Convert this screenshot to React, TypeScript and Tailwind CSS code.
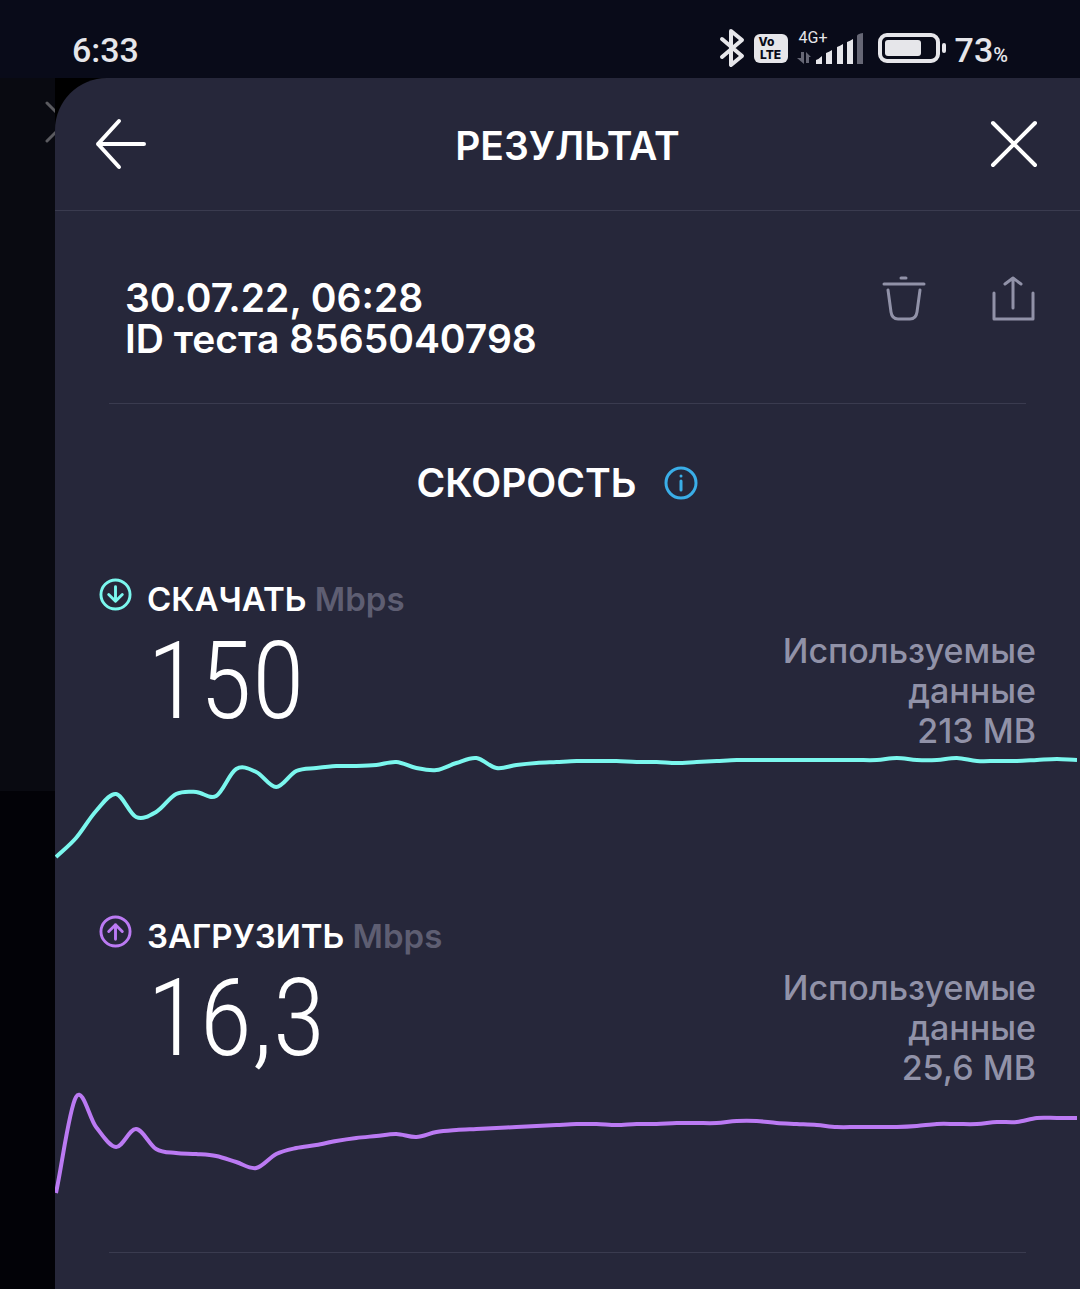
import type { ReactNode } from "react";

interface Metric {
    label: string;
    value: string;
    used: string;
    color: string;
    icon: ReactNode;
    points: number[];
}

const CHART_WIDTH = 1024;
const CHART_HEIGHT = 110;
const STEP = 20;

const downloadPoints = [
    106, 87, 60, 43, 66, 61, 43, 41, 45, 18, 21, 36, 20, 17, 15, 15, 14, 11, 17,
    19, 12, 7, 17, 14, 12, 11, 10, 10, 10, 11, 11, 12, 11, 10, 9, 9, 9, 9, 9, 9,
    9, 9, 7, 9, 9, 7, 10, 10, 10, 9, 8, 9,
];

const uploadPoints = [
    105, 9, 39, 59, 41, 61, 65, 66, 68, 74, 80, 66, 60, 57, 53, 50, 48, 46, 49,
    44, 42, 41, 40, 39, 38, 37, 36, 36, 37, 36, 36, 35, 35, 35, 33, 33, 35, 36,
    37, 39, 39, 39, 39, 38, 36, 36, 36, 34, 34, 30, 30, 30,
];

function smoothPath(points: number[]) {
    let d = `M0 ${points[0]}`;
    for (let i = 0; i < points.length - 1; i++) {
        // the ends have no outer neighbour, so they continue in a straight line
        const before = points[i - 1] ?? 2 * points[i] - points[i + 1];
        const after = points[i + 2] ?? points[i + 1];
        const y1 = points[i] + (points[i + 1] - before) / 6;
        const y2 = points[i + 1] - (after - points[i]) / 6;
        const x = i * STEP;
        d += ` C${x + STEP / 3} ${y1} ${x + (STEP * 2) / 3} ${y2} ${x + STEP} ${points[i + 1]}`;
    }
    return d;
}

const metrics: Metric[] = [
    {
        label: "СКАЧАТЬ",
        value: "150",
        used: "213 MB",
        color: "#7bf7ee",
        icon: <path d="M17 9v15M10 17l7 7 7-7" />,
        points: downloadPoints,
    },
    {
        label: "ЗАГРУЗИТЬ",
        value: "16,3",
        used: "25,6 MB",
        color: "#bb7af3",
        icon: <path d="M17 25V10M10 17l7-7 7 7" />,
        points: uploadPoints,
    },
];

function StatusBar() {
    return (
        <div className="flex h-[78px] items-center justify-between bg-[#090b19] pt-[18px] pr-[72px] pl-[72px] font-[Roboto,sans-serif] text-[#e6e6ea]">
            <span className="pt-1 text-[34px] leading-10 font-medium">6:33</span>
            <div className="flex items-center">
                <svg
                    width="26"
                    height="40"
                    viewBox="0 0 26 40"
                    fill="none"
                    stroke="currentColor"
                    strokeWidth="4"
                    strokeLinecap="round"
                    strokeLinejoin="round"
                >
                    <path d="M3 11l20 17-11 9V3l11 9L3 29" />
                </svg>
                <div className="ml-[9px] flex h-[29px] w-[34px] flex-col items-center justify-center rounded-md bg-[#e6e6ea] font-[Inter,sans-serif] text-xs leading-[13px] font-extrabold text-[#090b19]">
                    <span className="w-6">Vo</span>
                    <span>LTE</span>
                </div>
                <div className="relative ml-[9px] h-10 w-[67px]">
                    <span className="absolute top-0 left-0.5 text-base leading-5">
                        4G+
                    </span>
                    <svg width="67" height="40" viewBox="0 0 67 40" fill="currentColor">
                        <g fill="#666775">
                            <path d="M4 24h3v12L0 30h4zM9 35V24l5 5h-2v6z" />
                            <path d="M60 8q0-2 6-3v31h-6z" />
                        </g>
                        <path d="M19 36v-4q3-1 6-4v8zM29 36V25q3-1 6-3v14zM40 36V19q3-1 6-3v20zM50 36V14q3-1 6-3v25z" />
                    </svg>
                </div>
                <svg
                    className="ml-[14px]"
                    width="68"
                    height="32"
                    viewBox="0 0 68 32"
                    fill="currentColor"
                >
                    <rect
                        x="2"
                        y="3"
                        width="58"
                        height="26"
                        rx="7"
                        fill="none"
                        stroke="currentColor"
                        strokeWidth="4"
                    />
                    <rect x="7" y="8" width="36" height="16" rx="3" />
                    <rect x="64" y="11" width="4" height="10" rx="2" />
                </svg>
                <span className="ml-[9px] pt-1 text-[34px] leading-10 font-medium">
                    73<span className="text-xl">%</span>
                </span>
            </div>
        </div>
    );
}

function MetricBlock({ metric }: { metric: Metric }) {
    return (
        <article className="mb-[46px]">
            <div className="flex h-[51px] items-start pt-2 pl-11">
                <svg
                    width="33"
                    height="33"
                    viewBox="0 0 34 34"
                    fill="none"
                    stroke={metric.color}
                    strokeWidth="3"
                    strokeLinecap="round"
                    strokeLinejoin="round"
                >
                    <circle cx="17" cy="17" r="15" />
                    {metric.icon}
                </svg>
                <h3 className="ml-[15px] text-[33px] leading-[42px] font-semibold text-white">
                    {metric.label}{" "}
                    <span className="text-[#5e5e72]">Mbps</span>
                </h3>
            </div>
            <div className="flex justify-between pr-11 pl-[92px]">
                <p className="font-['Roboto_Condensed','Liberation_Sans_Narrow',sans-serif] text-[108px] leading-[120px] font-light text-white">
                    {metric.value}
                </p>
                <p className="w-64 pt-[10px] text-right text-[34px] leading-10 font-medium text-[#9192a8]">
                    Используемые данные
                    <br />
                    {metric.used}
                </p>
            </div>
            <svg
                className="block h-[110px] w-full"
                viewBox={`-1 0 ${CHART_WIDTH} ${CHART_HEIGHT}`}
                preserveAspectRatio="none"
                fill="none"
                stroke={metric.color}
                strokeWidth="4"
                strokeLinejoin="round"
            >
                <path d={smoothPath(metric.points)} vectorEffect="non-scaling-stroke" />
            </svg>
        </article>
    );
}

export default function App() {
    return (
        <div className="flex min-h-screen flex-col bg-[#020207] font-[Inter,'Noto_Sans',sans-serif]">
            <StatusBar />
            <div className="flex grow">
                <aside className="w-[55px] shrink-0">
                    <div className="flex h-[713px] items-start justify-end bg-[#090a11] pt-[22px]">
                        <svg
                            width="10"
                            height="44"
                            viewBox="0 0 10 44"
                            stroke="#5b5b60"
                            strokeWidth="3"
                            strokeLinecap="round"
                        >
                            <path d="M2 3l20 20M2 41l20-20" />
                        </svg>
                    </div>
                </aside>
                <div className="flex grow bg-black">
                    <main className="grow rounded-tl-[52px] bg-[#26273a] pb-9">
                        <header className="flex h-[133px] items-center justify-between border-b border-[#3a3b4f] px-10">
                            <button type="button" aria-label="Назад" className="text-white">
                                <svg
                                    width="52"
                                    height="52"
                                    viewBox="0 0 52 52"
                                    fill="none"
                                    stroke="currentColor"
                                    strokeWidth="4"
                                    strokeLinecap="round"
                                    strokeLinejoin="round"
                                >
                                    <path d="M49 26H3M24 3L3 26l21 23" />
                                </svg>
                            </button>
                            <h1 className="pt-1 text-[39px] leading-10 font-semibold text-white">
                                РЕЗУЛЬТАТ
                            </h1>
                            <button type="button" aria-label="Закрыть" className="text-white">
                                <svg
                                    width="52"
                                    height="52"
                                    viewBox="0 0 52 52"
                                    stroke="currentColor"
                                    strokeWidth="4"
                                    strokeLinecap="round"
                                >
                                    <path d="M5 5l42 42M47 5L5 47" />
                                </svg>
                            </button>
                        </header>

                        <section className="mx-[54px] flex h-[193px] items-start justify-between border-b border-[#3a3b4f] pt-16 pl-4">
                            <p className="pt-0.5 text-[39px] leading-[41px] font-semibold text-white">
                                30.07.22, 06:28
                                <br />
                                ID теста 8565040798
                            </p>
                            <div className="-mr-2.5 flex gap-16 text-[#9192a8]">
                                <button type="button" aria-label="Удалить">
                                    <svg
                                        width="46"
                                        height="46"
                                        viewBox="0 0 46 46"
                                        fill="none"
                                        stroke="currentColor"
                                        strokeWidth="3"
                                        strokeLinecap="round"
                                    >
                                        <path d="M21 3h5M4 9h40M8 15l3 22q1 7 7 7h12q6 0 7-7l3-22" />
                                    </svg>
                                </button>
                                <button type="button" aria-label="Поделиться">
                                    <svg
                                        width="46"
                                        height="46"
                                        viewBox="0 0 46 46"
                                        fill="none"
                                        stroke="currentColor"
                                        strokeWidth="3"
                                        strokeLinecap="round"
                                        strokeLinejoin="round"
                                    >
                                        <path d="M23 33V3M15 9l8-6 8 6M4 18v26h39V18" />
                                    </svg>
                                </button>
                            </div>
                        </section>

                        <section>
                            <div className="mb-2 flex h-[158px] items-center justify-center gap-7 pr-5">
                                <h2 className="text-[39px] leading-10 font-semibold text-white">
                                    СКОРОСТЬ
                                </h2>
                                <button
                                    type="button"
                                    aria-label="О скорости"
                                    className="text-[#3aaee8]"
                                >
                                    <svg
                                        width="34"
                                        height="34"
                                        viewBox="0 0 34 34"
                                        fill="none"
                                        stroke="currentColor"
                                        strokeWidth="3"
                                        strokeLinecap="round"
                                    >
                                        <circle cx="17" cy="17" r="15" />
                                        <path d="M17 15v9M17 10v0" />
                                    </svg>
                                </button>
                            </div>
                            {metrics.map((metric) => (
                                <MetricBlock key={metric.label} metric={metric} />
                            ))}
                        </section>
                        <hr className="mx-[54px] mt-[54px] border-[#3a3b4f]" />
                    </main>
                </div>
            </div>
        </div>
    );
}
